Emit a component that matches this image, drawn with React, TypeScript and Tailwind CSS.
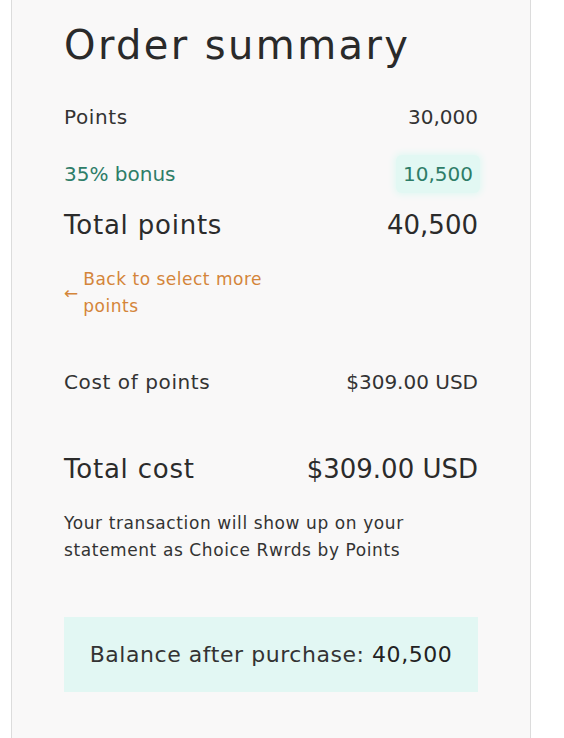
import React from 'react';

const font = { fontFamily: '"DejaVu Sans", "Liberation Sans", sans-serif' };

function Row({ label, value, big }: { label: string; value: string; big?: boolean }) {
  return (
    <div
      className={
        big
          ? 'flex items-center justify-between text-[26px] leading-[32px] text-[#2b2b2b]'
          : 'flex items-center justify-between text-[20px] leading-[28px] text-[#333333]'
      }
    >
      <span className="tracking-[0.03em]">{label}</span>
      <span>{value}</span>
    </div>
  );
}

export default function App() {
  return (
    <div className="min-h-[738px] bg-white pl-[11px] pr-[33px]" style={font}>
      <div className="min-h-[738px] border-x border-[#dcdcdc] bg-[#f9f8f8] pl-[52px] pr-[52px] pt-[21px] pb-10">
        <h1 className="text-[40px] leading-[48px] font-normal text-[#2a2a2a] tracking-[0.06em]">
          Order summary
        </h1>

        <div className="mt-[34px]">
          <Row label="Points" value="30,000" />
        </div>

        <div className="mt-[24px] flex items-center justify-between text-[20px] leading-[28px] text-[#2e7d68]">
          <span>35% bonus</span>
          <span className="-mr-[2px] rounded-md bg-[#e2f8f3] px-[7px] py-[5px] shadow-[0_0_6px_2px_#e2f8f3]">
            10,500
          </span>
        </div>

        <div className="mt-[16px]">
          <Row label="Total points" value="40,500" big />
        </div>

        <a className="mt-[25px] flex w-[230px] items-center gap-[5px] text-[#d4853a] cursor-pointer">
          <span className="text-[17px] leading-none">←</span>
          <span className="text-[17px] leading-[27px] tracking-[0.03em]">Back to select more points</span>
        </a>

        <div className="mt-[48px]">
          <Row label="Cost of points" value="$309.00 USD" />
        </div>

        <div className="mt-[57px]">
          <Row label="Total cost" value="$309.00 USD" big />
        </div>

        <p className="mt-[25px] w-[380px] text-[17px] leading-[27px] tracking-[0.035em] text-[#333333]">
          Your transaction will show up on your statement as Choice Rwrds by Points
        </p>

        <div className="mt-[53px] flex h-[75px] items-center justify-center bg-[#e2f7f3] text-[22px] tracking-[0.025em] text-[#333333]">
          Balance after purchase:&nbsp;<span className="text-[#222222]">40,500</span>
        </div>
      </div>
    </div>
  );
}
